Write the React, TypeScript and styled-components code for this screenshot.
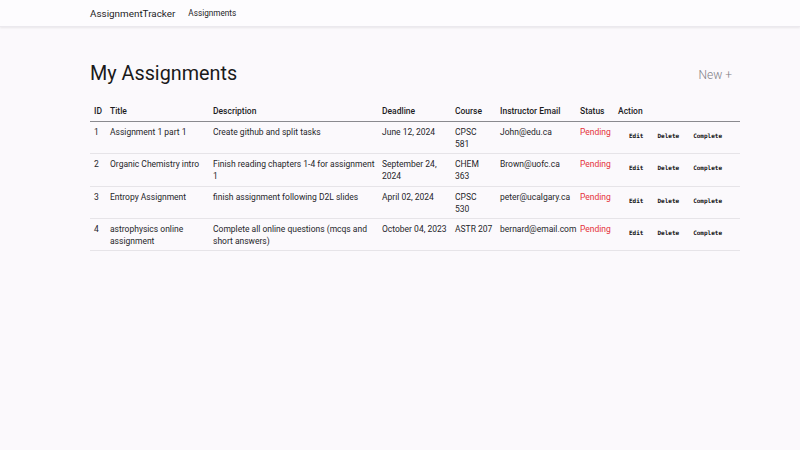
import React from "react";
import styled, { createGlobalStyle } from "styled-components";

const Global = createGlobalStyle`
  html, body { margin: 0; padding: 0; background: #fbf9fc; }
  body { font-family: Roboto, "Liberation Sans", sans-serif; color: #212529; }
  * { box-sizing: border-box; }
`;

const Page = styled.div`
  min-height: 450px;
  background: #fbf9fc;
`;

const Nav = styled.nav`
  height: 27px;
  display: flex;
  align-items: center;
  gap: 13px;
  padding-left: 90px;
  background: #fdfcfe;
  box-shadow: 0 1px 2px rgba(0, 0, 0, 0.08);
  border-bottom: 1px solid #ebe9ee;
`;

const Brand = styled.span`
  font-size: 9.9px;
  color: #1d1d1f;
`;

const NavLink = styled.span`
  font-size: 8.2px;
  color: #1d1d1f;
`;

const Main = styled.main`
  padding: 34px 60px 0 90px;
`;

const HeaderRow = styled.div`
  display: flex;
  align-items: center;
  justify-content: space-between;
  height: 24px;
  margin-bottom: 17px;
`;

const Title = styled.h1`
  margin: 0;
  font-size: 19.8px;
  font-weight: 400;
  color: #1a1a1a;
`;

const NewButton = styled.button`
  background: none;
  border: none;
  padding: 3px 8px 0 0;
  font-family: inherit;
  font-size: 12px;
  font-weight: 300;
  color: #808086;
  cursor: pointer;
`;

const Table = styled.table`
  width: 650px;
  border-collapse: collapse;
  table-layout: fixed;
  font-size: 8.5px;
`;

const Th = styled.th`
  text-align: left;
  font-weight: 500;
  padding: 4px 2px 5px 4px;
  line-height: 10px;
  border-bottom: 1.5px solid #8a8a8f;
  color: #1d1d1f;
  white-space: nowrap;
`;

const Td = styled.td<{ $status?: boolean; $narrow?: boolean }>`
  vertical-align: top;
  padding: 4px ${(p) => (p.$narrow ? "3.5px" : "2px")} 3.3px 4px;
  line-height: 12px;
  height: 31px;
  border-bottom: 1px solid #e6e4e8;
  color: ${(p) => (p.$status ? "#e5323b" : "#26262a")};
`;

const Actions = styled.div`
  display: flex;
  padding-top: 4px;
  padding-left: 4px;
`;

const ActionButton = styled.button`
  background: none;
  border: none;
  font-family: "DejaVu Sans Mono", "Liberation Mono", monospace;
  font-weight: bold;
  font-size: 6px;
  color: #111;
  padding: 2px 7px;
  cursor: pointer;
`;

const rows = [
  {
    id: 1,
    title: "Assignment 1 part 1",
    description: "Create github and split tasks",
    deadline: "June 12, 2024",
    course: "CPSC 581",
    email: "John@edu.ca",
  },
  {
    id: 2,
    title: "Organic Chemistry intro",
    description: "Finish reading chapters 1-4 for assignment 1",
    deadline: "September 24, 2024",
    course: "CHEM 363",
    email: "Brown@uofc.ca",
  },
  {
    id: 3,
    title: "Entropy Assignment",
    description: "finish assignment following D2L slides",
    deadline: "April 02, 2024",
    course: "CPSC 530",
    email: "peter@ucalgary.ca",
  },
  {
    id: 4,
    title: "astrophysics online assignment",
    description: "Complete all online questions (mcqs and short answers)",
    deadline: "October 04, 2023",
    course: "ASTR 207",
    email: "bernard@email.com",
  },
];

const widths = [16, 103, 169, 73, 45, 80, 38, 126];

export default function App() {
  return (
    <Page>
      <Global />
      <Nav>
        <Brand>AssignmentTracker</Brand>
        <NavLink>Assignments</NavLink>
      </Nav>
      <Main>
        <HeaderRow>
          <Title>My Assignments</Title>
          <NewButton>New +</NewButton>
        </HeaderRow>
        <Table>
          <colgroup>
            {widths.map((w, i) => (
              <col key={i} style={{ width: w }} />
            ))}
          </colgroup>
          <thead>
            <tr>
              <Th>ID</Th>
              <Th>Title</Th>
              <Th>Description</Th>
              <Th>Deadline</Th>
              <Th>Course</Th>
              <Th>Instructor Email</Th>
              <Th>Status</Th>
              <Th>Action</Th>
            </tr>
          </thead>
          <tbody>
            {rows.map((r) => (
              <tr key={r.id}>
                <Td>{r.id}</Td>
                <Td>{r.title}</Td>
                <Td>{r.description}</Td>
                <Td>{r.deadline}</Td>
                <Td $narrow>{r.course}</Td>
                <Td>{r.email}</Td>
                <Td $status>Pending</Td>
                <Td>
                  <Actions>
                    <ActionButton>Edit</ActionButton>
                    <ActionButton>Delete</ActionButton>
                    <ActionButton>Complete</ActionButton>
                  </Actions>
                </Td>
              </tr>
            ))}
          </tbody>
        </Table>
      </Main>
    </Page>
  );
}
